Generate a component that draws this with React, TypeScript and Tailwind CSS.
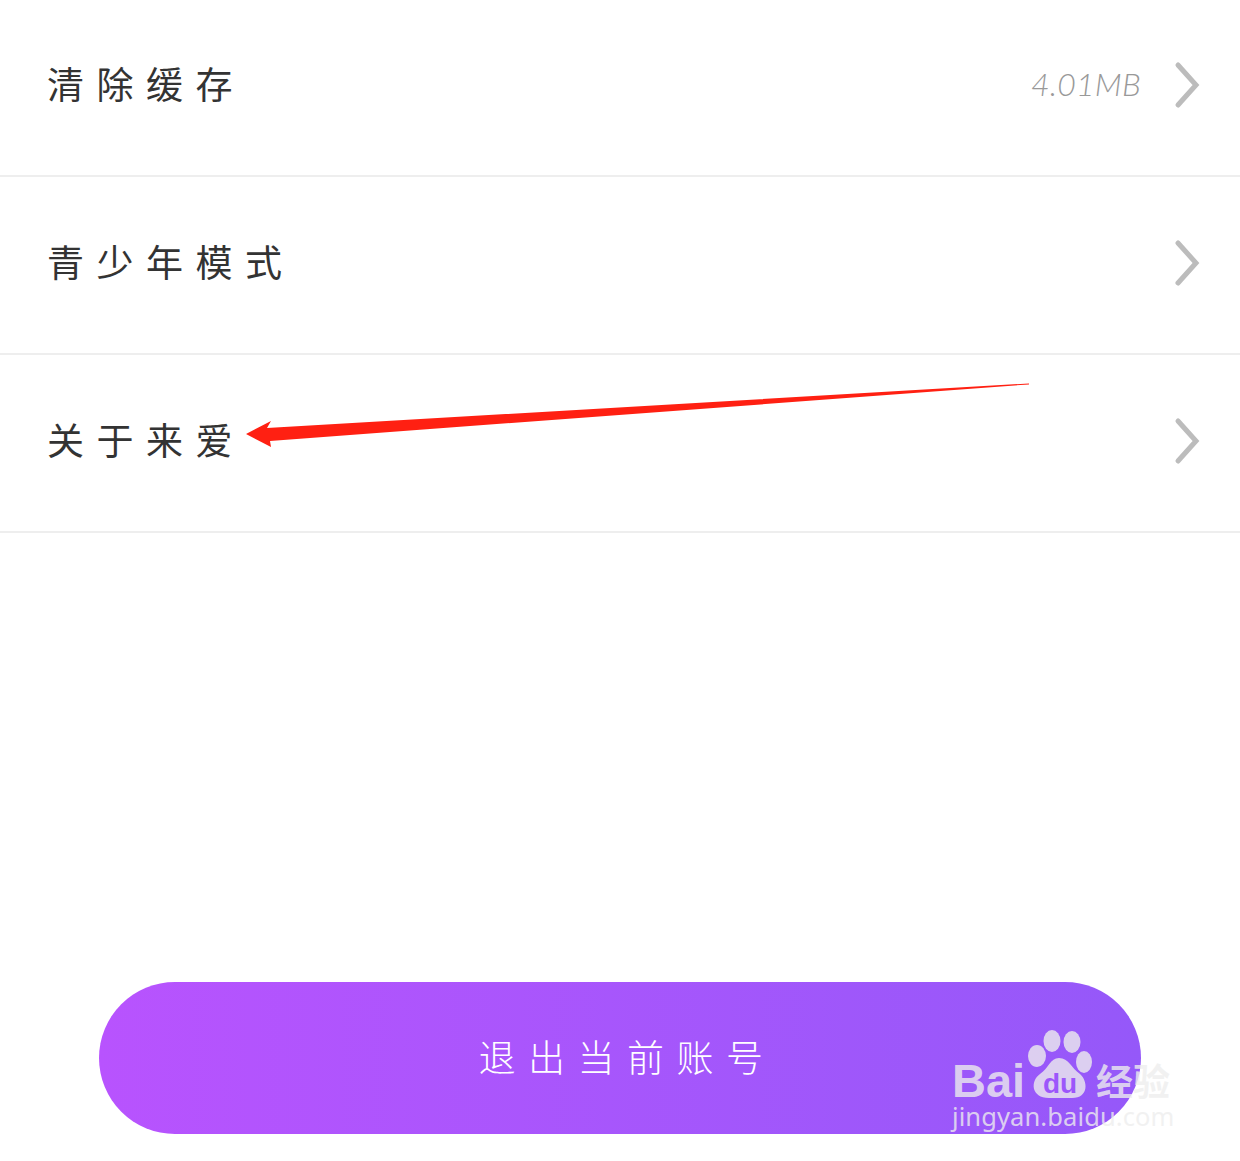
import React from "react";

function Chevron() {
  return (
    <svg width="28" height="48" viewBox="0 0 28 48" className="mb-[5px] shrink-0" fill="none">
      <path d="M5 4 L23 24 L5 44" stroke="#bcbcbc" strokeWidth="5" strokeLinecap="round" strokeLinejoin="miter" />
    </svg>
  );
}

function Row({ label, value, height }: { label: string; value?: string; height: string }) {
  return (
    <div className={`flex items-center border-b-2 border-[#eeeeee] pl-[47px] pr-[39px] ${height}`}>
      <span className="flex-1 pb-[8px] font-['Noto_Sans_CJK_SC','Noto_Sans',sans-serif] text-[37px] font-normal leading-none tracking-[12.5px] text-[#333333]">
        {label}
      </span>
      {value && (
        <span className="mr-[32px] pb-[8px] font-['Lato','Liberation_Sans',sans-serif] text-[32px] font-light italic leading-none tracking-[0.2px] text-[#999999]">
          {value}
        </span>
      )}
      <Chevron />
    </div>
  );
}

function Paw() {
  return (
    <svg width="68" height="72" viewBox="0 0 68 72" className="shrink-0 fill-current">
      <ellipse cx="24" cy="13" rx="8.5" ry="11" />
      <ellipse cx="44" cy="14" rx="8.5" ry="11" />
      <ellipse cx="9" cy="28" rx="9" ry="11" />
      <ellipse cx="56" cy="34" rx="8" ry="11" />
      <path d="M31 30 C22 30 21 40 12 46 C2 53 3 70 21 70 L44 70 C61 70 60 53 52 46 C43 40 41 30 31 30 Z" />
      <text
        x="32"
        y="65"
        textAnchor="middle"
        fontSize="28"
        fontWeight="700"
        className="fill-[#9c56fb] font-['Liberation_Sans',sans-serif]"
      >
        du
      </text>
    </svg>
  );
}

export default function App() {
  return (
    <div className="relative flex h-[1161px] w-[1240px] flex-col overflow-hidden bg-white">
      <Row label="清除缓存" value="4.01MB" height="h-[177px]" />
      <Row label="青少年模式" height="h-[178px]" />
      <Row label="关于来爱" height="h-[178px]" />

      <div className="mt-auto px-[99px] pb-[27px]">
        <div className="flex h-[152px] items-center justify-center rounded-[76px] bg-gradient-to-r from-[#b853fe] to-[#9558f9] pb-[4px] pl-[14px] font-['Noto_Sans_CJK_SC','Noto_Sans',sans-serif] text-[37px] font-light leading-none tracking-[12.5px] text-white">
          退出当前账号
        </div>
      </div>

      {/* red annotation arrow */}
      <svg className="absolute left-0 top-0" width="1240" height="1161" fill="none">
        <polygon points="246,434 271,421 267,428 1029,383.4 1029,384.4 270,441 271,447" fill="#ff2012" />
      </svg>

      {/* watermark */}
      <div className="absolute left-[952px] top-[1028px] flex w-[224px] flex-col text-[#eeeeee]/80">
        <div className="flex h-[72px] items-end">
          <span className="w-[76px] font-['Liberation_Sans',sans-serif] text-[47px] font-bold leading-[38px]">
            Bai
          </span>
          <Paw />
          <span className="mb-[1px] font-['Noto_Sans_CJK_SC',sans-serif] text-[37px] font-bold leading-[38px]">
            经验
          </span>
        </div>
        <span className="mt-[4px] font-['Noto_Sans',sans-serif] text-[25.5px] leading-none tracking-[0.1px]">
          jingyan.baidu.com
        </span>
      </div>
    </div>
  );
}
